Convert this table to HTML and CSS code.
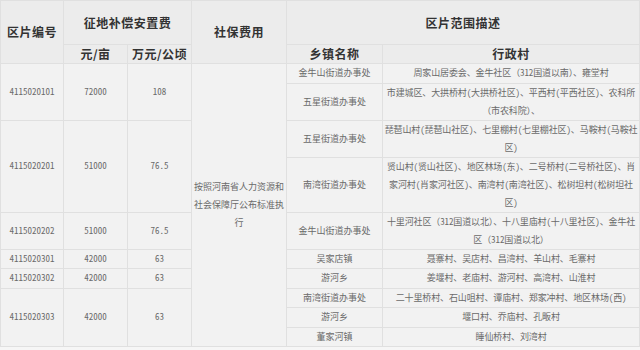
FILE: index.html
```html
<!DOCTYPE html>
<html lang="zh-CN">
<head>
<meta charset="utf-8">
<title>区片范围</title>
<link rel="stylesheet" href="styles.css">
</head>
<body>
<table class="zone-table">
  <colgroup>
    <col class="c-id"><col class="c-mu"><col class="c-ha"><col class="c-ss"><col class="c-town"><col class="c-vil">
  </colgroup>
  <thead>
    <tr class="h1">
      <th rowspan="2">区片编号</th>
      <th colspan="2">征地补偿安置费</th>
      <th rowspan="2">社保费用</th>
      <th colspan="2">区片范围描述</th>
    </tr>
    <tr class="h2">
      <th>元/亩</th>
      <th>万元/公顷</th>
      <th>乡镇名称</th>
      <th>行政村</th>
    </tr>
  </thead>
  <tbody>
    <tr>
      <td rowspan="2">4115020101</td>
      <td rowspan="2">72000</td>
      <td rowspan="2">108</td>
      <td rowspan="10" class="ss">按照河南省人力资源和社会保障厅公布标准执行</td>
      <td>金牛山街道办事处</td>
      <td class="vil">周家山居委会、金牛社区（312国道以南）、雍堂村</td>
    </tr>
    <tr>
      <td>五星街道办事处</td>
      <td class="vil">市建城区、大拱桥村(大拱桥社区)、平西村(平西社区)、农科所（市农科院）、</td>
    </tr>
    <tr>
      <td rowspan="2">4115020201</td>
      <td rowspan="2">51000</td>
      <td rowspan="2">76.5</td>
      <td>五星街道办事处</td>
      <td class="vil">琵琶山村(琵琶山社区)、七里棚村(七里棚社区)、马鞍村(马鞍社区)</td>
    </tr>
    <tr>
      <td>南湾街道办事处</td>
      <td class="vil">贤山村(贤山社区)、地区林场(东)、二号桥村(二号桥社区)、肖家河村(肖家河社区)、南湾村(南湾社区)、松树坦村(松树坦社区)</td>
    </tr>
    <tr>
      <td>4115020202</td>
      <td>51000</td>
      <td>76.5</td>
      <td>金牛山街道办事处</td>
      <td class="vil">十里河社区（312国道以北）、十八里庙村(十八里社区)、金牛社区（312国道以北）</td>
    </tr>
    <tr>
      <td>4115020301</td>
      <td>42000</td>
      <td>63</td>
      <td>吴家店镇</td>
      <td class="vil">聂寨村、吴店村、昌湾村、羊山村、毛寨村</td>
    </tr>
    <tr>
      <td>4115020302</td>
      <td>42000</td>
      <td>63</td>
      <td>游河乡</td>
      <td class="vil">姜堰村、老庙村、游河村、高湾村、山淮村</td>
    </tr>
    <tr>
      <td rowspan="3">4115020303</td>
      <td rowspan="3">42000</td>
      <td rowspan="3">63</td>
      <td>南湾街道办事处</td>
      <td class="vil">二十里桥村、石山咀村、谭庙村、郑家冲村、地区林场(西)</td>
    </tr>
    <tr>
      <td>游河乡</td>
      <td class="vil">堰口村、乔庙村、孔畈村</td>
    </tr>
    <tr>
      <td>董家河镇</td>
      <td class="vil">睡仙桥村、刘湾村</td>
    </tr>
  </tbody>
</table>
</body>
</html>
```
FILE: styles.css
```css
html, body {
  margin: 0;
  padding: 0;
  background: #f6f6f6;
}
.zone-table {
  width: 639px;
  table-layout: fixed;
  border-collapse: collapse;
  background: #f2f2f2;
  font-family: "Noto Sans CJK SC", "Noto Sans", sans-serif;
  color: #6a6a6a;
}
.c-id { width: 63px; }
.c-mu { width: 64px; }
.c-ha { width: 64px; }
.c-ss { width: 95px; }
.c-town { width: 96px; }
.c-vil { width: 257px; }
.zone-table th,
.zone-table td {
  border: 1px solid #e0e0e0;
  padding: 0;
  text-align: center;
  vertical-align: middle;
}
.zone-table th {
  background: #ececec;
  color: #333;
  font-size: 12px;
  font-weight: bold;
  letter-spacing: 0.5px;
  line-height: 16px;
}
.zone-table tr.h1 th { height: 43px; }
.zone-table tr.h2 th { height: 18px; }
.zone-table td {
  font-family: "Noto Sans Mono CJK SC", "Noto Sans CJK SC", monospace;
  font-size: 9px;
  line-height: 18px;
  height: 18.5px;
}
.zone-table td.vil {
  letter-spacing: -0.12px;
}
.zone-table td.ss {
  font-family: "Noto Sans CJK SC", sans-serif;
  font-size: 9px;
}
```
